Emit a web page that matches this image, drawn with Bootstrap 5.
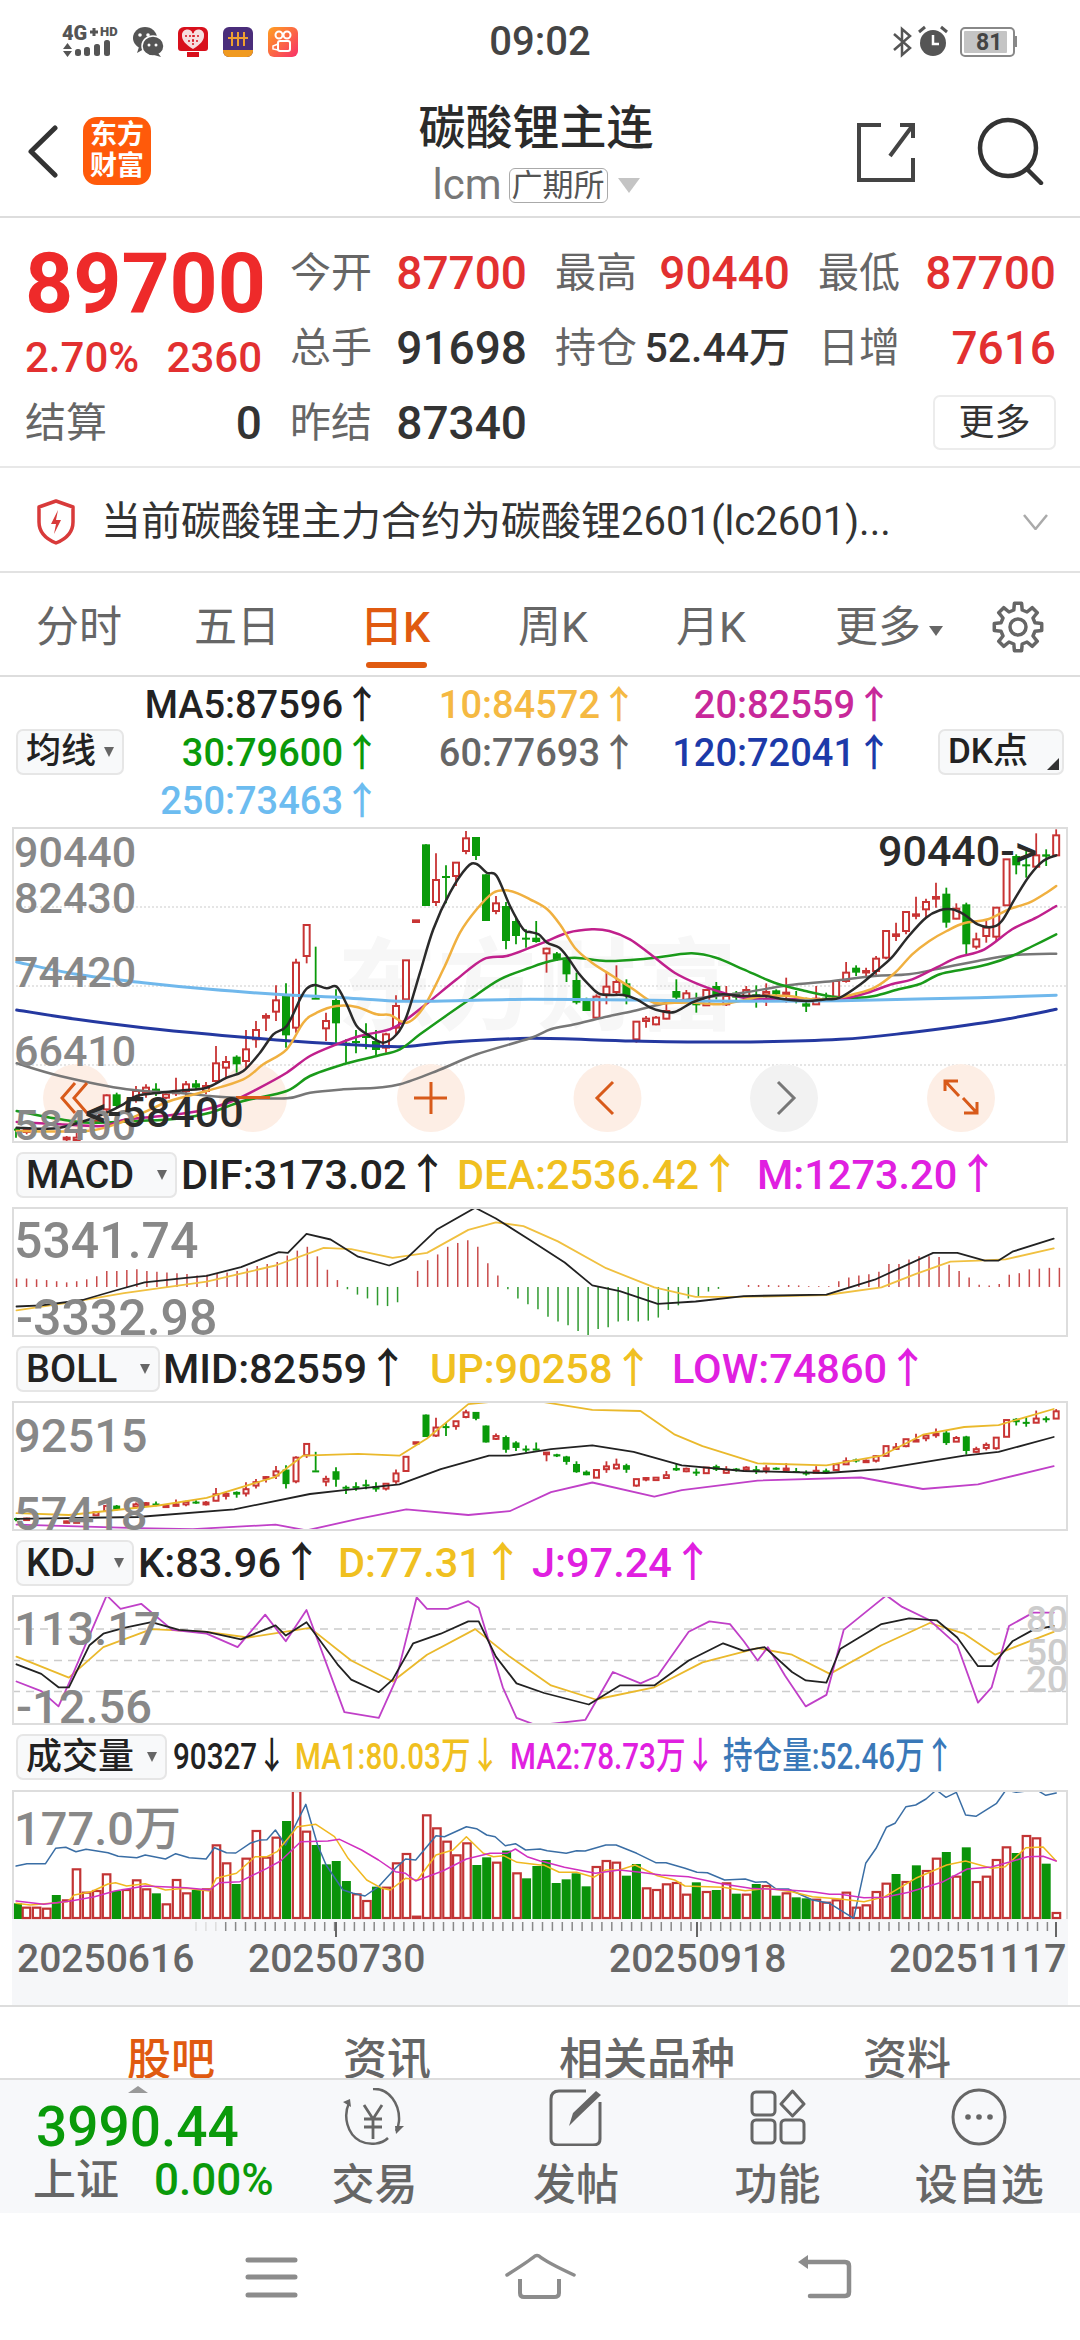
<!DOCTYPE html>
<html lang="zh">
<head>
<meta charset="utf-8">
<title>碳酸锂主连</title>
<link href="https://cdn.jsdelivr.net/npm/bootstrap@5.3.0/dist/css/bootstrap.min.css" rel="stylesheet">
<style>
html,body{margin:0;padding:0;background:#fff}
body{width:1080px;height:2340px;overflow:hidden;font-family:Roboto,"Noto Sans CJK SC",sans-serif;color:#333}
.stat-bar{height:83px;padding:0 62px}
.stat-side{flex:1 1 0}
.stat-time{font-size:40px;font-weight:500;color:#444;line-height:1}
.head-bar{height:135px;border-bottom:2px solid #ddd;padding:0 35px 0 27px;align-items:flex-start}
.head-side{flex:1 1 0}
.head-icons{gap:62px}
.share-ico{margin-top:39px}
.find-ico{margin-top:34px}
.brand-logo{width:68px;height:68px;border-radius:14px;background:#ff5a0a;color:#fff;font-size:27px;font-weight:700;line-height:31px;text-align:center;margin-left:25px;margin-top:34px;padding-top:3px}
.back-ico{margin-top:42px}
.title-main{font-size:47px;line-height:56px;font-weight:500;color:#2b2b2b;margin-top:17px;margin-bottom:6px}
.code-txt{font-size:42px;line-height:46px;color:#777}
.tag-box{border:1.5px solid #aaa;border-radius:6px;font-size:31px;line-height:33px;color:#555;padding:0 2px;margin-left:7px}
.tag-arrow{width:0;height:0;border-left:11px solid transparent;border-right:11px solid transparent;border-top:15px solid #c4c4c4;margin-left:10px}
.quote-wrap{height:250px;padding:17px 24px 0 25px;border-bottom:2px solid #e8e8e8;display:grid;grid-template-columns:237px 108px 157px 106px 157px 108px 158px;grid-template-rows:75px 75px 75px;align-items:center}
.q-left{grid-row:1/3;align-self:start;padding-top:7px}
.q-big{font-size:84px;font-weight:700;line-height:84px;color:#ee2a2a}
.q-sub{font-size:42px;line-height:46px;color:#e23030;margin-top:9px;font-weight:500}
.q-lab{font-size:41px;color:#666;margin-left:28px;white-space:nowrap;line-height:48px}
.q-lab0{margin-left:0}
.q-val{font-size:46px;text-align:right;font-weight:500;line-height:48px;white-space:nowrap}
.q-mid{font-size:41px}
.q-red{color:#e23030}
.q-dark{color:#333}
.more-btn{grid-column:6/8;justify-self:end;width:123px;height:55px;padding:0;font-size:36px;line-height:50px;color:#333;background:#fff;border:2px solid #ececec;border-radius:7px}
.note-row{height:105px;padding:5px 32px 0 36px;border-bottom:2px solid #e2e2e2}
.note-txt{font-size:40px;color:#333;margin-left:25px;white-space:nowrap}
.tab-row{height:104px;border-bottom:2px solid #ddd}
.tab-cell{width:158px;height:102px;text-align:center;font-size:43px;color:#666;line-height:108px;position:relative}
.tab-last{padding-left:40px;white-space:nowrap}
.tab-on{color:#e05a10;font-weight:500}
.tab-on::after{content:"";position:absolute;left:50px;bottom:7px;width:61px;height:6px;border-radius:3px;background:#e05a10}
.tab-tri{display:inline-block;width:0;height:0;border-left:7px solid transparent;border-right:7px solid transparent;border-top:10px solid #666;vertical-align:middle;margin-left:8px}
.gear-ico{margin:28px 36px 0 auto}
.ma-wrap{height:150px;padding:0 16px}
.pick-btn{height:46px;padding:0 8px;border:2px solid #e6e6e6;border-radius:7px;background:#f8f9fa;color:#222;font-size:38px;line-height:42px;white-space:nowrap;display:flex;align-items:center;justify-content:space-between;font-weight:500}
.pick-tri{width:0;height:0;border-left:5px solid transparent;border-right:5px solid transparent;border-top:10px solid #666}
.pw-ma{width:108px;font-size:35px}
.pw-dk{width:126px;font-size:35px;position:relative}
.pw-macd{width:161px}
.pw-boll{width:144px}
.pw-kdj{width:118px}
.pw-vol{width:151px;font-size:36px}
.dk-mark{position:absolute;right:3px;bottom:3px}
.ma-grid{display:grid;grid-template-columns:249px 257px 255px;grid-auto-rows:48px;width:761px;margin-left:8px;text-align:right;font-size:38px;line-height:48px;font-weight:500;margin-top:4px;height:150px;align-self:flex-start;white-space:nowrap}
.chart-svg{display:block;margin-left:12px}
.sub-head{height:64px;padding:9px 0 0 16px;align-items:flex-start;font-size:41.5px;line-height:46px;white-space:nowrap;font-weight:500}
.sub-vol{height:65px;font-size:37px}
.sq-x{display:inline-block;transform:scaleX(.8);transform-origin:0 50%}
.c-blk{color:#222}.c-yel{color:#f0c020}.c-mag{color:#e020e0}.c-org{color:#f5b942}.c-pnk{color:#c8289a}.c-grn{color:#0a9a0a}.c-gry{color:#666}.c-nvy{color:#1c3aa9}.c-sky{color:#6cbcf0}.c-ble{color:#3a78b8}
.w-dif{margin-left:4px;width:276px}.w-dea{width:300px}
.w-mid{margin-left:3px;width:267px}.w-up{width:242px}
.w-k{margin-left:4px;width:200px}.w-d{width:194px}
.w-vv{margin-left:6px;width:122px}.w-m1{width:215px}.w-m2{width:213px}
.y-lab{font-size:43px;fill:#888;font-weight:500}
.y-big{font-size:47px;fill:#888;font-weight:500}
.y-huge{font-size:50px;fill:#888;font-weight:500}
.y-dark{font-size:43px;fill:#2b2b2b;font-weight:500}
.y-lite{font-size:37px;fill:#ccc;font-weight:500}
.y-date{font-size:39px;fill:#666;font-weight:500}
.mark-bg{font-size:100px;fill:#f7f7f7;font-weight:700}
.low-tabs{height:73px;overflow:hidden;border-top:2px solid #ddd;padding:26px 0 0 127px;gap:128px;font-size:44px;line-height:54px;color:#666;font-weight:500;align-items:flex-start;white-space:nowrap}
.low-on{color:#e05a10}
.dock{height:135px;background:#f7f8fa;border-top:2px solid #ddd}
.dock-left{width:274px;padding:6px 0 0 33px}
.dock-tri{width:0;height:0;border-left:10px solid transparent;border-right:10px solid transparent;border-bottom:7px solid #999;margin-left:95px;margin-bottom:9px}
.idx-val{font-size:55px;line-height:50px;color:#0a9a0a;font-weight:500;padding-left:3px}
.idx-sub{font-size:43px;line-height:48px;color:#666;margin-top:4px;font-weight:500;white-space:nowrap}
.idx-pct{font-size:44px;color:#0a9a0a;margin-left:35px}
.dock-item{width:202px;text-align:center;color:#666;font-size:43px;line-height:48px;font-weight:500;padding-top:8px}
.dock-ico{display:block;margin:0 auto 15px;height:58px}
.sys-nav{height:127px}
</style>
</head>
<body>

<div class="d-flex align-items-center stat-bar">
  <div class="stat-side d-flex align-items-center">
    <svg width="240" height="36" viewBox="62 24 240 36">
      <text x="62" y="40" font-family="Roboto" font-weight="900" font-size="20" fill="#555">4G</text>
      <path d="M90 32h8M94 28v8" stroke="#555" stroke-width="3"/>
      <text x="100" y="36" font-family="Roboto" font-weight="900" font-size="13" fill="#555">HD</text>
      <path d="M67.5 43l4.5 6h-9zM67.5 57l4.5-6h-9z" fill="#555"/>
      <rect x="75" y="49" width="6" height="7" rx="2.5" fill="#555"/><rect x="84" y="47" width="6" height="9" rx="2.5" fill="#555"/><rect x="94" y="44" width="6" height="12" rx="2.5" fill="#555"/><rect x="104" y="40" width="6" height="16" rx="2.5" fill="#555"/>
      <ellipse cx="145" cy="38" rx="12" ry="11" fill="#555"/><path d="M139 47l-2 6 7-4z" fill="#555"/>
      <ellipse cx="153" cy="46" rx="11" ry="10" fill="#555" stroke="#fff" stroke-width="1.5"/><path d="M158 53l3 4-7-2z" fill="#555"/>
      <circle cx="140" cy="35" r="1.8" fill="#fff"/><circle cx="148" cy="35" r="1.8" fill="#fff"/><circle cx="149" cy="45" r="1.5" fill="#fff"/><circle cx="156" cy="45" r="1.5" fill="#fff"/>
      <path d="M178 33a6 6 0 0 1 6-6h18a6 6 0 0 1 6 6v15q0 3-3 3h-24q-3 0-3-3z" fill="#d8101c"/>
      <path d="M193 49c-8-5-11-9-11-13a5.5 5.5 0 0 1 11-2 5.5 5.5 0 0 1 11 2c0 4-3 8-11 13z" fill="#f6dfe0"/>
      <path d="M185 36h16M188 41h10M193 31v14" stroke="#d8101c" stroke-width="1.5" stroke-dasharray="2 2"/>
      <rect x="187" y="52" width="12" height="5" fill="#d8101c"/>
      <rect x="223" y="27" width="30" height="30" rx="6" fill="#4a2d7a"/><path d="M223 50h30v1a6 6 0 0 1-6 6h-18a6 6 0 0 1-6-6z" fill="#f09a20"/>
      <path d="M228 38h20M232 32v14M238 32v14M244 32v14" stroke="#f0a030" stroke-width="2"/>
      <defs><linearGradient id="ks" x1="0" y1="0" x2="1" y2="1"><stop offset="0" stop-color="#ffa020"/><stop offset="1" stop-color="#f8306a"/></linearGradient></defs>
      <rect x="268" y="27" width="30" height="30" rx="6" fill="url(#ks)"/>
      <circle cx="279" cy="35" r="3.5" fill="none" stroke="#fff" stroke-width="2"/><circle cx="287" cy="35" r="3.5" fill="none" stroke="#fff" stroke-width="2"/>
      <rect x="278" y="41" width="12" height="10" rx="2" fill="none" stroke="#fff" stroke-width="2"/><path d="M278 44l-5 2v3l5 1" fill="none" stroke="#fff" stroke-width="1.5"/>
    </svg>
  </div>
  <div class="stat-time">09:02</div>
  <div class="stat-side d-flex align-items-center justify-content-end">
    <svg width="125" height="36" viewBox="893 24 125 36">
      <path d="M894 34l16 14-8 7V29l8 7-16 14" fill="none" stroke="#555" stroke-width="2.5"/>
      <circle cx="933" cy="43" r="13" fill="#555"/><path d="M933 35v9h6" stroke="#fff" stroke-width="2.5" fill="none"/>
      <path d="M919 32l6-5M947 32l-6-5" stroke="#555" stroke-width="3"/>
      <rect x="961" y="28" width="53" height="28" rx="4" fill="none" stroke="#888" stroke-width="2"/><rect x="964" y="31" width="43" height="22" rx="1" fill="#c4c4c4"/>
      <rect x="1015" y="36" width="2" height="11" fill="#888"/>
      <text x="976" y="50" font-family="Roboto" font-weight="700" font-size="23" fill="#444">81</text>
    </svg>
  </div>
</div>

<div class="d-flex head-bar">
  <div class="head-side d-flex">
    <svg class="back-ico" width="31" height="53" viewBox="0 0 31 53"><path d="M28 3L4 26.5 28 50" fill="none" stroke="#333" stroke-width="5" stroke-linecap="round" stroke-linejoin="round"/></svg>
    <div class="brand-logo">东方<br>财富</div>
  </div>
  <div class="text-center">
    <div class="title-main">碳酸锂主连</div>
    <div class="d-flex align-items-center justify-content-center"><span class="code-txt">lcm</span><span class="tag-box">广期所</span><span class="tag-arrow"></span></div>
  </div>
  <div class="head-side d-flex justify-content-end head-icons">
    <svg class="share-ico" width="58" height="60" viewBox="0 0 58 60"><path d="M24 3H2v55h54V36M56 16V3H43M56 3L33 34" fill="none" stroke="#444" stroke-width="4"/></svg>
    <svg class="find-ico" width="68" height="68" viewBox="0 0 68 68"><circle cx="31" cy="31" r="28" fill="none" stroke="#333" stroke-width="4.5"/><path d="M50 52l14 14" stroke="#333" stroke-width="4.5" stroke-linecap="round"/></svg>
  </div>
</div>

<div class="quote-wrap">
  <div class="q-left">
    <div class="q-big">89700</div>
    <div class="q-sub d-flex justify-content-between"><span>2.70%</span><span>2360</span></div>
  </div>
  <div class="q-lab">今开</div><div class="q-val q-red">87700</div>
  <div class="q-lab">最高</div><div class="q-val q-red">90440</div>
  <div class="q-lab">最低</div><div class="q-val q-red">87700</div>
  <div class="q-lab">总手</div><div class="q-val q-dark">91698</div>
  <div class="q-lab">持仓</div><div class="q-val q-dark q-mid">52.44万</div>
  <div class="q-lab">日增</div><div class="q-val q-red">7616</div>
  <div class="d-flex justify-content-between align-items-center"><span class="q-lab q-lab0">结算</span><span class="q-val q-dark">0</span></div>
  <div class="q-lab">昨结</div><div class="q-val q-dark">87340</div>
  <div></div><div></div>
  <button class="btn more-btn" type="button">更多</button>
</div>

<div class="d-flex align-items-center note-row">
  <svg width="40" height="46" viewBox="0 0 40 46"><path d="M20 2l17 6v15c0 10-7 17-17 21C10 40 3 33 3 23V8z" fill="none" stroke="#d83a3a" stroke-width="3.5" stroke-linejoin="round"/><path d="M22 11l-7 14h5l-2 10 7-14h-5z" fill="#d83a3a"/></svg>
  <div class="note-txt flex-grow-1">当前碳酸锂主力合约为碳酸锂2601(lc2601)...</div>
  <svg width="25" height="16" viewBox="0 0 25 16"><path d="M1 1l11.5 14L24 1" fill="none" stroke="#aaa" stroke-width="2.5"/></svg>
</div>

<div class="d-flex tab-row">
  <div class="tab-cell">分时</div>
  <div class="tab-cell">五日</div>
  <div class="tab-cell tab-on">日K</div>
  <div class="tab-cell">周K</div>
  <div class="tab-cell">月K</div>
  <div class="tab-cell tab-last">更多<span class="tab-tri"></span></div>
  <svg class="gear-ico" width="52" height="52" viewBox="0 0 52 52"><path id="gearPath" fill="none" stroke="#666" stroke-width="3.5" stroke-linejoin="round"/><circle cx="26" cy="26" r="8" fill="none" stroke="#666" stroke-width="3.5"/></svg>
</div>

<div class="d-flex align-items-center ma-wrap">
  <button class="btn pick-btn pw-ma" type="button">均线<span class="pick-tri"></span></button>
  <div class="ma-grid">
    <div class="c-blk">MA5:87596↑</div><div class="c-org">10:84572↑</div><div class="c-pnk">20:82559↑</div>
    <div class="c-grn">30:79600↑</div><div class="c-gry">60:77693↑</div><div class="c-nvy">120:72041↑</div>
    <div class="c-sky">250:73463↑</div>
  </div>
  <button class="btn pick-btn pw-dk ms-auto" type="button">DK点<svg class="dk-mark" width="12" height="12" viewBox="0 0 12 12"><path d="M12 0v12H0z" fill="#333"/></svg></button>
</div>

<svg id="chMain" class="chart-svg" width="1056" height="316" viewBox="12 827 1056 316">
  <g id="gMain"></g>
  <g>
    <text class="y-lab" x="14" y="867">90440</text>
    <text class="y-lab" x="14" y="913">82430</text>
    <text class="y-lab" x="14" y="987">74420</text>
    <text class="y-lab" x="14" y="1066">66410</text>
    <text class="y-lab" x="14" y="1140">58400</text>
    <text class="y-dark" x="85" y="1127">&lt;-58400</text>
    <text class="y-dark" x="878" y="866">90440-&gt;</text>
  </g>
</svg>

<div class="d-flex sub-head">
  <button class="btn pick-btn pw-macd" type="button">MACD<span class="pick-tri"></span></button>
  <span class="c-blk w-dif">DIF:3173.02↑</span><span class="c-yel w-dea">DEA:2536.42↑</span><span class="c-mag">M:1273.20↑</span>
</div>
<svg id="chMacd" class="chart-svg" width="1056" height="130" viewBox="12 1207 1056 130">
  <g id="gMacd"></g>
  <text class="y-huge" x="14" y="1258">5341.74</text>
  <text class="y-huge" x="16" y="1335">-3332.98</text>
</svg>

<div class="d-flex sub-head">
  <button class="btn pick-btn pw-boll" type="button">BOLL<span class="pick-tri"></span></button>
  <span class="c-blk w-mid">MID:82559↑</span><span class="c-yel w-up">UP:90258↑</span><span class="c-mag">LOW:74860↑</span>
</div>
<svg id="chBoll" class="chart-svg" width="1056" height="130" viewBox="12 1401 1056 130">
  <g id="gBoll"></g>
  <text class="y-big" x="14" y="1452">92515</text>
  <text class="y-big" x="14" y="1530">57418</text>
</svg>

<div class="d-flex sub-head">
  <button class="btn pick-btn pw-kdj" type="button">KDJ<span class="pick-tri"></span></button>
  <span class="c-blk w-k">K:83.96↑</span><span class="c-yel w-d">D:77.31↑</span><span class="c-mag">J:97.24↑</span>
</div>
<svg id="chKdj" class="chart-svg" width="1056" height="130" viewBox="12 1595 1056 130">
  <g id="gKdj"></g>
  <text class="y-big" x="14" y="1645">113.17</text>
  <text class="y-big" x="16" y="1723">-12.56</text>
  <text class="y-lite" x="1026" y="1632">80</text>
  <text class="y-lite" x="1026" y="1665">50</text>
  <text class="y-lite" x="1026" y="1692">20</text>
</svg>

<div class="d-flex sub-head sub-vol">
  <button class="btn pick-btn pw-vol" type="button">成交量<span class="pick-tri"></span></button>
  <span class="w-vv"><span class="sq-x c-blk">90327↓</span></span><span class="w-m1"><span class="sq-x c-yel">MA1:80.03万↓</span></span><span class="w-m2"><span class="sq-x c-mag">MA2:78.73万↓</span></span><span><span class="sq-x c-ble">持仓量:52.46万↑</span></span>
</div>
<svg id="chVol" class="chart-svg" width="1056" height="215" viewBox="12 1790 1056 215">
  <g id="gVol"></g>
  <text class="y-big" x="14" y="1845">177.0万</text>
  <text class="y-date" x="17" y="1972">20250616</text>
  <text class="y-date" x="248" y="1972">20250730</text>
  <text class="y-date" x="609" y="1972">20250918</text>
  <text class="y-date" x="889" y="1972">20251117</text>
</svg>

<div class="d-flex low-tabs">
  <span class="low-on">股吧</span><span>资讯</span><span>相关品种</span><span>资料</span>
</div>

<div class="d-flex dock">
  <div class="dock-left">
    <div class="dock-tri"></div>
    <div class="idx-val">3990.44</div>
    <div class="idx-sub">上证<span class="idx-pct">0.00%</span></div>
  </div>
  <div class="dock-item">
    <svg class="dock-ico" width="64" height="58" viewBox="0 0 64 58"><path d="M7 15C1 28 5 46 18 53c10 5 22 3 28-3M31 1c16-1 27 15 26 32-.3 4-1 7-3 10" fill="none" stroke="#666" stroke-width="2.5"/><path d="M1 14l7-3 1 8zM62 38l-8 8-1-8z" fill="#666"/><path d="M22 17l9 14 9-14M22 31h18M22 39h18M31 31v20" fill="none" stroke="#666" stroke-width="2.8"/></svg>
    交易
  </div>
  <div class="dock-item">
    <svg class="dock-ico" width="56" height="58" viewBox="0 0 56 58"><path d="M38 3H11Q3 3 3 11v40q0 6 7 6h35q7 0 7-6V14" fill="none" stroke="#666" stroke-width="3"/><path d="M21 38l4-13L48 3l5 4-24 23z" fill="#666"/></svg>
    发帖
  </div>
  <div class="dock-item">
    <svg class="dock-ico" width="56" height="56" viewBox="0 0 56 56"><rect x="2" y="3" width="23" height="23" rx="4" fill="none" stroke="#666" stroke-width="3"/><rect x="2" y="31" width="23" height="23" rx="4" fill="none" stroke="#666" stroke-width="3"/><rect x="31" y="31" width="23" height="23" rx="4" fill="none" stroke="#666" stroke-width="3"/><path d="M42.5 2L54 15 42.5 27 31 15z" fill="none" stroke="#666" stroke-width="3" stroke-linejoin="round"/></svg>
    功能
  </div>
  <div class="dock-item">
    <svg class="dock-ico" width="56" height="58" viewBox="0 0 56 58"><ellipse cx="28" cy="29" rx="26" ry="27" fill="none" stroke="#666" stroke-width="3"/><circle cx="17" cy="29" r="2.8" fill="#666"/><circle cx="28" cy="29" r="2.8" fill="#666"/><circle cx="39" cy="29" r="2.8" fill="#666"/></svg>
    设自选
  </div>
</div>

<div class="d-flex sys-nav">
  <svg width="1080" height="127" viewBox="0 2213 1080 127">
    <path d="M248 2260h47M248 2277h47M248 2295h47" stroke="#8c8c8c" stroke-width="5" stroke-linecap="round"/>
    <path d="M507 2275q22-14 28-19 2-1 4 0 7 6 35 19" fill="none" stroke="#8c8c8c" stroke-width="3.5" stroke-linecap="round"/>
    <path d="M520 2279v14q0 4 4 4h30q5 0 5-4v-14" fill="none" stroke="#8c8c8c" stroke-width="4"/>
    <path d="M806 2262h39q4 0 4 4v26q0 4-4 4h-35" fill="none" stroke="#8c8c8c" stroke-width="4.5" stroke-linecap="round"/>
    <path d="M798 2262l10-7v14z" fill="#8c8c8c"/>
  </svg>
</div>

<script src="https://cdn.jsdelivr.net/npm/bootstrap@5.3.0/dist/js/bootstrap.bundle.min.js"></script>
<script>
const NS="http://www.w3.org/2000/svg";
function el(p,n,a){const e=document.createElementNS(NS,n);for(const k in a)e.setAttribute(k,a[k]);p.appendChild(e);return e}
function pairs(a,sx,ox,sy,oy){const r=[];for(let i=0;i<a.length;i+=2)r.push([ox+a[i]/sx,oy+a[i+1]/sy]);return r}
function poly(g,pts,c,w){el(g,"polyline",{points:pts.map(p=>p[0].toFixed(1)+","+p[1].toFixed(1)).join(" "),fill:"none",stroke:c,"stroke-width":w,"stroke-linejoin":"round","stroke-linecap":"round"})}
function curve(g,p,c,w){let d="M"+p[0][0].toFixed(1)+" "+p[0][1].toFixed(1);for(let i=0;i<p.length-1;i++){const a=p[Math.max(i-1,0)],b=p[i],e=p[i+1],f=p[Math.min(i+2,p.length-1)];d+="C"+(b[0]+(e[0]-a[0])/6).toFixed(1)+" "+(b[1]+(e[1]-a[1])/6).toFixed(1)+" "+(e[0]-(f[0]-b[0])/6).toFixed(1)+" "+(e[1]-(f[1]-b[1])/6).toFixed(1)+" "+e[0].toFixed(1)+" "+e[1].toFixed(1)}el(g,"path",{d:d,fill:"none",stroke:c,"stroke-width":w,"stroke-linecap":"round"})}
function frame(g,x,y,w,h){el(g,"rect",{x:x+1,y:y+1,width:w-2,height:h-2,fill:"none",stroke:"#ddd","stroke-width":2})}
const R="#c83434",G="#0a9a0a";
const cL=[[18,905,908,912,935,0],[50,905,912,918,925,1],[170,930,935,940,950,1],[200,920,935,942,945,1],[258,855,860,885,890,1],[290,805,808,850,860,1],[320,800,805,840,845,0],[378,780,795,815,830,1],[408,775,785,800,815,1],[438,772,788,802,810,0],[468,800,805,815,820,1],[498,755,795,802,810,1],[528,765,775,795,810,1],[558,762,772,785,790,0],[588,768,780,795,805,1],[618,660,712,765,770,1],[648,690,708,725,755,1],[680,688,692,715,740,0],[708,612,670,705,730,1],[738,585,612,640,665,1],[768,562,570,575,615,1],[798,478,523,557,585,1],[828,472,508,628,665,0],[858,398,410,605,620,1],[890,297,297,390,412,1],[917,362,515,518,518,0],[948,560,585,607,645,1],[978,490,522,592,650,0],[1008,640,650,655,710,0],[1038,612,645,648,682,0],[1068,592,630,635,670,0],[1098,612,645,672,690,0],[1128,620,625,665,680,1],[1158,508,540,605,625,1],[1188,403,403,520,525,1],[1218,283,283,288,288,1],[1248,55,55,240,240,0],[1278,82,162,228,240,1],[1308,118,150,155,232,0],[1338,108,110,150,180,1],[1368,15,37,75,85,1],[1398,33,33,90,102,0],[1428,145,145,285,285,0],[1458,210,232,255,265,1],[1488,228,240,345,370,0],[1518,275,285,330,355,0],[1548,310,335,340,365,0]];
const cR=[[18,285,335,348,350,0],[48,365,368,382,440,1],[78,378,382,400,405,0],[106,395,400,445,468,0],[135,440,462,530,535,0],[164,515,525,555,555,0],[193,505,512,575,578,1],[222,440,482,505,535,1],[251,418,468,498,510,1],[280,460,472,510,535,0],[309,585,587,640,650,1],[337,570,578,585,605,1],[366,570,575,595,598,1],[396,520,555,578,580,1],[425,460,495,515,520,0],[454,492,502,522,530,1],[483,500,525,538,560,0],[512,490,492,538,540,1],[541,468,480,510,520,0],[570,480,510,535,540,1],[599,495,500,515,525,0],[628,480,492,510,525,1],[657,478,505,510,545,0],[686,472,498,505,540,1],[715,490,493,505,510,0],[744,455,500,505,530,1],[773,495,520,524,532,0],[802,515,532,542,558,0],[831,480,518,535,535,1],[860,500,515,520,525,0],[889,465,465,512,515,1],[918,408,440,465,470,1],[947,418,425,440,450,0],[976,425,435,438,455,1],[1005,390,398,435,450,1],[1034,315,315,395,400,1],[1063,290,325,330,345,1],[1092,258,258,315,325,1],[1121,212,265,268,280,1],[1150,218,228,250,275,1],[1179,170,213,218,245,1],[1209,185,203,290,305,0],[1238,232,248,278,280,1],[1267,230,235,355,385,0],[1296,320,340,362,370,1],[1325,285,305,330,350,1],[1354,245,245,332,345,1],[1384,100,100,238,240,1],[1412,85,90,118,145,0],[1441,75,115,120,155,0],[1470,22,88,122,125,1],[1499,70,85,92,120,0],[1528,10,28,88,90,1]];
const candles=cL.map(c=>[10+c[0]/3,826+c[1]/3,826+c[2]/3,826+c[3]/3,826+c[4]/3,c[5]]).concat(cR.map(c=>[530+c[0]/2.904,826+c[1]/3,826+c[2]/3,826+c[3]/3,826+c[4]/3,c[5]]));
function drawC(g,map,hw){candles.forEach(c=>{const col=c[5]?R:G,x=c[0];el(g,"line",{x1:x,x2:x,y1:map(c[1]),y2:map(c[4]),stroke:col,"stroke-width":1.8});const t=map(c[2]),b=map(c[3]);if(c[5])el(g,"rect",{x:x-hw+1,y:t,width:hw*2-2,height:Math.max(b-t,1.5),fill:"#fff",stroke:col,"stroke-width":2});else el(g,"rect",{x:x-hw,y:t,width:hw*2,height:Math.max(b-t,2),fill:col})})}
(function(){const g=document.getElementById("gMain");
const txt=el(g,"text",{class:"mark-bg",x:337,y:1022});txt.textContent="东方财富";
[907,986,1065].forEach(y=>el(g,"line",{x1:12,x2:1068,y1:y,y2:y,stroke:"#ddd","stroke-width":1.5,"stroke-dasharray":"2 2"}));
[[77,"#fdeee5"],[253,"#fdeee5"],[431,"#fdeee5"],[607.5,"#fdeee5"],[784,"#f2f2f2"],[961,"#fdeee5"]].forEach(c=>el(g,"ellipse",{cx:c[0],cy:1098,rx:34,ry:34,fill:c[1]}));
drawC(g,y=>y,4);
const L=(a,b)=>pairs(a,3,10,3,826).concat(pairs(b,2.904,530,3,826).filter(p=>p[0]>530));
curve(g,L([20,552,200,580,400,605,600,625,800,642,1000,655,1170,662,1300,650,1560,637],[0,638,300,645,600,648,900,640,1100,620,1350,585,1528,550]),"#2438a0",3);
curve(g,L([20,712,150,750,350,790,500,800,600,810,680,815,830,817,900,800,1000,790,1100,785,1170,775,1280,735,1400,685,1560,637],[60,610,130,595,210,575,300,555,400,530,500,515,620,500,750,478,880,465,1000,450,1100,445,1200,425,1300,405,1400,388,1528,383]),"#777",2.5);
curve(g,L([20,855,150,880,240,890,380,885,500,878,600,860,700,825,830,795,900,750,1000,715,1100,690,1170,670,1230,625,1300,575,1380,520,1470,460,1560,425],[60,405,130,395,220,405,320,400,400,390,470,382,540,395,620,430,710,470,800,495,880,512,950,515,1000,510,1070,490,1130,475,1190,445,1260,430,1330,415,1400,390,1460,360,1528,325]),"#1a9a1a",2.5);
curve(g,L([20,888,150,895,280,900,350,880,480,868,580,852,660,828,740,790,830,740,900,690,980,655,1050,630,1140,610,1190,580,1260,525,1340,460,1420,400,1490,390,1560,365],[50,345,110,320,180,310,230,315,290,340,350,385,420,440,490,475,560,500,620,515,700,520,800,520,900,520,980,500,1050,475,1110,460,1180,425,1240,395,1320,370,1400,310,1470,275,1528,240]),"#c0208c",2.5);
curve(g,L([20,915,230,915,330,890,400,860,480,825,590,795,700,760,760,715,830,670,880,590,920,560,980,540,1040,543,1100,565,1140,567,1190,590,1240,545,1300,430,1350,320,1400,250,1450,200,1490,193,1530,205,1560,220],[50,250,90,300,130,365,180,410,240,450,300,490,360,530,420,530,480,530,550,535,610,525,680,510,750,510,820,520,880,518,940,505,1000,485,1060,440,1110,385,1160,345,1210,315,1260,292,1330,280,1390,250,1450,230,1500,200,1528,180]),"#f0b040",2.5);
curve(g,L([20,408,200,445,400,470,600,490,800,505,1000,515,1150,525,1300,525,1560,520],[300,522,500,525,800,525,1000,522,1300,515,1528,508]),"#70b8ec",3);
curve(g,L([20,905,90,908,150,905,240,880,290,860,340,835,380,810,450,800,520,793,590,785,650,755,700,735,750,680,790,625,830,600,870,520,890,488,915,477,950,487,980,482,1010,535,1040,600,1080,630,1120,650,1160,625,1190,570,1230,440,1270,310,1320,200,1370,125,1398,113,1430,140,1460,150,1500,240,1540,310,1560,318],[25,325,50,350,85,365,110,395,140,440,170,475,205,505,270,507,310,520,350,545,380,555,420,558,470,530,510,515,560,505,610,510,680,510,740,520,800,525,860,520,900,515,960,475,1000,440,1050,395,1100,330,1150,275,1190,253,1225,250,1260,265,1300,295,1340,303,1370,285,1410,215,1450,150,1490,105,1528,88]),"#2a2a2a",2.5);
el(g,"line",{x1:236,x2:270,y1:1097.5,y2:1097.5,stroke:"#d85a1a","stroke-width":3});
const O="#d85a1a";
el(g,"path",{d:"M75 1083l-13 15 13 15M87 1083l-13 15 13 15",fill:"none",stroke:O,"stroke-width":3});
el(g,"path",{d:"M414 1098h33M431 1082v32",fill:"none",stroke:O,"stroke-width":3});
el(g,"path",{d:"M613 1082l-16 16 16 16",fill:"none",stroke:O,"stroke-width":3});
el(g,"path",{d:"M778 1082l16 16-16 16",fill:"none",stroke:"#777","stroke-width":3});
el(g,"path",{d:"M945 1091v-10h13M945 1081l14 15M977 1102v11h-13M977 1113l-14-15",fill:"none",stroke:O,"stroke-width":3});
frame(g,12,827,1056,316);
})();
(function(){const g=document.getElementById("gMacd");const sx=1.452,sy=2.613;
const h=[22,22,20,18,15,12,15,20,28,42,42,44,46,42,40,38,36,34,30,32,34,38,42,48,55,60,65,82,95,105,80,45,18,-6,-20,-30,-48,-50,-40,0,42,70,85,105,115,122,105,62,30,-6,-30,-45,-58,-78,-90,-100,-115,-130,-110,-105,-90,-88,-90,-88,-80,-60,-48,-30,-25,-12,-5,0,0,5,5,5,4,5,4,2,2,2,15,25,30,33,40,60,60,72,80,80,78,58,42,25,6,4,8,32,36,46,48,50,50];
h.forEach((v,i)=>{if(!v)return;const x=(24+14.56*i)/sx,y0=1140+384/sy,y1=1140+(384-v)/sy;el(g,"line",{x1:x,x2:x,y1:y0,y2:y1,stroke:v>0?"#c84a4a":"#2f9a2f","stroke-width":1.5})});
poly(g,pairs([24,445,100,425,180,400,300,370,400,328,470,282,510,285,570,308,620,295,680,235,720,215,760,225,810,265,880,335,950,385,1010,410,1080,410,1200,405,1280,385,1330,350,1380,318,1420,315,1460,312,1530,283],sx,0,sy,1140),"#f0c040",1.8);
poly(g,pairs([24,435,60,432,120,418,170,392,210,372,270,360,300,355,350,332,405,293,418,295,445,245,480,260,520,305,565,328,590,310,635,233,690,177,720,205,770,262,820,320,860,380,900,395,955,428,1010,422,1080,408,1200,404,1270,365,1355,295,1390,295,1430,315,1450,315,1470,292,1530,258],sx,0,sy,1140),"#222",1.8);
frame(g,12,1207,1056,130);
})();
(function(){const g=document.getElementById("gBoll");const sx=1.452,sy=2.613;
drawC(g,y=>1409+(y-829)*0.364,3.5);
poly(g,pairs([24,975,100,980,230,955,300,935,400,880,440,825,520,820,580,825,620,780,680,690,720,683,790,685,860,705,930,708,980,770,1020,800,1100,845,1200,850,1280,825,1340,770,1400,750,1450,745,1530,703],sx,0,sy,1140),"#eab92c",1.8);
poly(g,pairs([24,990,200,985,340,965,450,925,500,915,580,900,640,860,710,825,740,825,800,808,860,798,920,815,990,850,1080,865,1200,870,1280,860,1400,825,1450,815,1530,776],sx,0,sy,1140),"#222",1.8);
poly(g,pairs([24,1005,200,1014,280,1017,400,1005,445,1020,520,990,590,965,680,980,740,970,800,920,860,895,950,932,990,915,1100,890,1250,882,1340,912,1420,900,1530,852],sx,0,sy,1140),"#c040c8",1.8);
frame(g,12,1401,1056,130);
})();
(function(){const g=document.getElementById("gKdj");const sx=1.452,sy=2.613;
[1278,1360,1441].forEach(y=>{const yy=1140+y/sy;el(g,"line",{x1:12,x2:1068,y1:yy,y2:yy,stroke:"#ccc","stroke-width":1.5,"stroke-dasharray":"8 6"})});
poly(g,pairs([24,1350,100,1405,150,1325,220,1278,300,1285,360,1300,450,1275,510,1360,570,1415,620,1345,690,1278,740,1350,800,1425,865,1462,950,1430,1020,1365,1100,1328,1150,1345,1205,1395,1280,1320,1350,1262,1400,1290,1445,1345,1530,1285],sx,0,sy,1140),"#eab92c",1.8);
poly(g,pairs([24,1415,60,1440,85,1480,100,1420,155,1190,175,1225,205,1212,250,1280,300,1290,345,1325,385,1240,415,1310,445,1228,500,1495,550,1510,575,1410,605,1195,620,1225,650,1225,680,1205,695,1222,730,1430,750,1510,780,1530,850,1515,890,1390,930,1420,955,1400,1000,1285,1030,1258,1060,1265,1080,1310,1100,1360,1115,1325,1140,1400,1170,1480,1200,1450,1225,1280,1287,1190,1310,1220,1350,1255,1390,1320,1420,1470,1440,1430,1465,1270,1500,1235,1530,1235],sx,0,sy,1140),"#c040c8",1.8);
poly(g,pairs([24,1370,60,1395,85,1430,100,1430,130,1320,150,1290,180,1275,220,1260,260,1280,300,1285,350,1305,400,1268,415,1295,445,1260,490,1370,510,1410,550,1443,570,1410,600,1315,640,1290,680,1258,695,1258,720,1350,750,1420,790,1445,855,1475,900,1425,950,1425,1000,1360,1050,1315,1080,1335,1110,1325,1150,1390,1170,1412,1200,1418,1220,1330,1280,1265,1320,1250,1360,1255,1390,1300,1420,1375,1440,1375,1470,1310,1500,1280,1530,1270],sx,0,sy,1140),"#222",1.8);
frame(g,12,1595,1056,130);
})();
(function(){const g=document.getElementById("gVol");
el(g,"rect",{x:12,y:1919,width:1056,height:86,fill:"#f6f7f9"});
const base=1918;
const vL=[[22,0,355],[48,1,365],[78,1,365],[108,1,368],[137,0,330],[167,1,343],[196,1,250],[226,1,320],[256,1,315],[285,1,265],[315,0,318],[344,1,312],[374,1,283],[403,1,310],[433,0,325],[462,1,355],[492,1,282],[522,1,322],[551,0,315],[581,1,310],[610,1,178],[640,1,232],[669,0,297],[698,1,218],[728,1,135],[758,1,215],[787,1,155],[818,0,108],[847,1,15],[876,1,137],[906,0,180],[936,0,238],[965,0,228],[995,0,288],[1025,1,325],[1055,1,345],[1084,0,305],[1113,1,305],[1143,1,232],[1172,1,204],[1202,1,392],[1232,1,88],[1262,1,127],[1292,1,167],[1321,1,208],[1351,1,172],[1381,0,240],[1410,0,217],[1439,1,230],[1469,0,197],[1499,1,262],[1528,0,280]];
const vR=[[20,0,243],[47,0,225],[76,0,294],[105,0,283],[134,0,265],[163,0,304],[192,1,243],[221,1,225],[250,1,230],[280,0,272],[309,0,237],[338,1,307],[367,1,312],[396,1,295],[425,1,291],[454,1,326],[483,0,292],[512,1,318],[541,0,315],[570,1,292],[599,0,326],[628,1,326],[657,0,297],[686,1,300],[715,0,332],[744,1,322],[773,0,337],[802,0,340],[831,1,341],[860,1,350],[889,1,343],[918,1,320],[947,1,365],[976,1,358],[1005,1,318],[1034,1,293],[1063,0,267],[1092,1,288],[1122,0,241],[1151,1,255],[1180,1,218],[1209,0,201],[1238,1,272],[1267,0,187],[1296,1,288],[1325,1,272],[1354,1,222],[1383,1,184],[1412,0,204],[1441,1,150],[1470,1,157],[1499,0,236],[1528,1,381]];
vL.map(v=>[10+v[0]/2.958,v[1],1785+v[2]/3]).concat(vR.map(v=>[530+v[0]/2.904,v[1],1785+v[2]/3])).forEach(b=>{
 if(b[1])el(g,"rect",{x:b[0]-3.5,y:b[2]+1,width:7.5,height:base-b[2]-1,fill:"#fff",stroke:"#c23434","stroke-width":2.2});
 else el(g,"rect",{x:b[0]-4.5,y:b[2],width:9,height:base-b[2]+1,fill:"#0a930a"});
});
for(let x=196;x<1056;x+=9.9){el(g,"line",{x1:x,x2:x,y1:1922,y2:1931,stroke:x<225?"#ddd":"#888","stroke-width":1.5})}
[336,697,1056].forEach(x=>el(g,"line",{x1:x,x2:x,y1:1922,y2:1937,stroke:"#666","stroke-width":2}));
const L=(a,b)=>pairs(a,2.958,10,3,1785).concat(pairs(b,2.904,530,3,1785).filter(p=>p[0]>530));
poly(g,L([18,243,50,236,105,236,135,190,165,187,195,200,225,193,290,203,320,214,375,218,400,210,460,222,490,206,530,218,580,222,605,188,640,203,668,204,710,175,740,165,760,164,785,135,815,180,875,58,910,180,935,240,985,315,1015,325,1050,333,1090,305,1140,250,1170,222,1200,225,1260,152,1285,155,1350,125,1380,131,1410,150,1435,155,1465,182,1495,176,1525,195,1568,192],[50,197,105,205,135,197,160,198,220,180,250,180,310,205,365,233,395,233,450,250,485,262,515,263,565,285,625,282,655,292,685,290,715,312,750,312,820,345,870,355,940,400,975,235,1005,190,1035,127,1060,115,1092,65,1120,60,1150,42,1180,15,1208,37,1238,22,1265,90,1295,94,1355,55,1382,15,1412,22,1470,14,1498,31,1528,24]),"#3a6ea5",1.5);
poly(g,L([18,355,60,360,170,350,190,330,240,320,290,297,312,293,345,303,400,296,460,315,520,310,590,318,610,280,670,265,725,215,760,215,790,200,850,125,905,118,960,155,1000,220,1055,285,1100,310,1125,315,1170,280,1205,285,1260,210,1310,195,1350,155,1400,205,1430,215,1460,212,1500,232,1568,240],[40,240,85,262,135,262,185,277,220,255,260,255,305,240,370,272,420,285,450,303,560,307,625,317,690,310,760,320,820,335,900,342,970,350,1030,335,1120,280,1210,240,1265,228,1340,250,1380,245,1440,188,1490,186,1528,228]),"#f0b820",1.5);
poly(g,L([18,348,100,358,180,348,250,335,310,318,400,303,520,308,590,315,620,293,680,290,760,250,800,228,860,170,940,168,975,163,1040,195,1090,225,1140,260,1170,265,1200,288,1280,258,1350,222,1420,205,1470,205,1495,192,1530,215,1568,228],[40,230,100,247,190,265,260,255,320,262,380,270,460,275,560,297,640,310,750,315,820,320,870,328,900,328,970,338,1030,337,1100,322,1200,290,1270,252,1340,246,1390,232,1445,215,1490,214,1528,228]),"#d030c0",1.5);
el(g,"path",{d:"M13 1919V1791H1067V1919",fill:"none",stroke:"#ddd","stroke-width":2});
})();
(function(){let d="";const n=8;for(let i=0;i<n;i++){const a=i*2*Math.PI/n-Math.PI/2,s=Math.PI/n;const P=(r,t)=>(26+r*Math.cos(t)).toFixed(1)+" "+(26+r*Math.sin(t)).toFixed(1);d+=(i?"L":"M")+P(24,a-s*.38)+"L"+P(24,a+s*.38)+"L"+P(17.5,a+s*.62)+"L"+P(17.5,a+s*1.38)}document.getElementById("gearPath").setAttribute("d",d+"Z")})();
</script>
</body>
</html>
